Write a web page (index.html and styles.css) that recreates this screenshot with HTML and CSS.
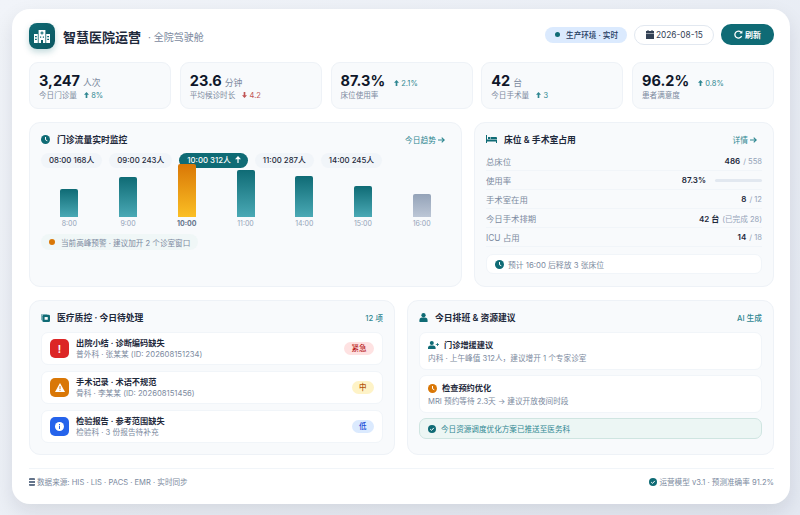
FILE: index.html
```html
<!DOCTYPE html>
<html>
    <head>
        <title>智慧医院运营</title>
        <meta charset="UTF-8">
        <meta name="viewport" content="width=device-width">
        <link rel="stylesheet" href="styles.css">
    </head>
    <body>
        <div class="dash">
            <header class="top">
                <div class="logo">
                    <svg width="16" height="13" viewBox="0 0 16 13"><path fill="#fff" d="M0 4h3.800v9H0zM12.200 4H16v9h-3.800zM4.600 0h6.800v13H9v-3H7v3H4.600z"/><path fill="#0f6b75" d="M7.400 1.500h1.200v1h1v1.100h-1v1H7.400v-1h-1V2.500h1zM1 6h1.800v1.300H1zM1 8.800h1.800v1.300H1zM13.200 6H15v1.300h-1.800zM13.200 8.800H15v1.300h-1.800zM6 6.500h1.200v1.300H6zM8.800 6.500H10v1.300H8.800z"/></svg>
                </div>
                <h1 class="title">智慧医院运营</h1>
                <span class="subtitle">· 全院驾驶舱</span>
                <div class="top-right">
                    <span class="env"><i class="dot"></i>生产环境 · 实时</span>
                    <span class="date">
                        <svg width="8" height="9" viewBox="0 0 8 9"><path fill="#334155" d="M1.500 0h1v1h3V0h1v1H8v2H0V1h1.500zM0 3.600h8V9H0z"/></svg>
                        2026-08-15
                    </span>
                    <span class="refresh">
                        <svg width="9" height="9" viewBox="0 0 9 9"><path fill="none" stroke="#fff" stroke-width="1.300" d="M7.600 6A3.500 3.500 0 1 1 7 2.200"/><path fill="#fff" d="M8.400 .4v3H5.400z"/></svg>
                        刷新
                    </span>
                </div>
            </header>

            <section class="kpis">
                <div class="kpi">
                    <div class="kpi-main"><b>3,247</b><span class="unit">人次</span></div>
                    <div class="kpi-sub">今日门诊量 <span class="up"><svg class="arr" viewBox="0 0 6 7"><path d="M3 0l3 3.300H4V7H2V3.300H0z"/></svg> 8%</span></div>
                </div>
                <div class="kpi">
                    <div class="kpi-main"><b>23.6</b><span class="unit">分钟</span></div>
                    <div class="kpi-sub">平均候诊时长 <span class="down"><svg class="arr" viewBox="0 0 6 7"><path d="M3 7L0 3.700h2V0h2v3.700h2z"/></svg> 4.2</span></div>
                </div>
                <div class="kpi">
                    <div class="kpi-main"><b>87.3%</b><span class="up side"><svg class="arr" viewBox="0 0 6 7"><path d="M3 0l3 3.300H4V7H2V3.300H0z"/></svg> 2.1%</span></div>
                    <div class="kpi-sub">床位使用率</div>
                </div>
                <div class="kpi">
                    <div class="kpi-main"><b>42</b><span class="unit">台</span></div>
                    <div class="kpi-sub">今日手术量 <span class="up"><svg class="arr" viewBox="0 0 6 7"><path d="M3 0l3 3.300H4V7H2V3.300H0z"/></svg> 3</span></div>
                </div>
                <div class="kpi">
                    <div class="kpi-main"><b>96.2%</b><span class="up side"><svg class="arr" viewBox="0 0 6 7"><path d="M3 0l3 3.300H4V7H2V3.300H0z"/></svg> 0.8%</span></div>
                    <div class="kpi-sub">患者满意度</div>
                </div>
            </section>

            <section class="row row-mid">
                <div class="panel">
                    <div class="panel-head">
                        <svg class="head-icon" width="9" height="9" viewBox="0 0 10 10"><circle cx="5" cy="5" r="5" fill="#0f6b75"/><path fill="none" stroke="#fff" stroke-width="1.100" d="M5 2.200V5.300L7 6.400"/></svg>
                        <h2>门诊流量实时监控</h2>
                        <a class="head-link">今日趋势 <svg class="go" viewBox="0 0 7 6"><path d="M0 3h6M3.700 .6L6.200 3 3.700 5.400"/></svg></a>
                    </div>
                    <div class="pills">
                        <span class="pill">08:00 168人</span>
                        <span class="pill">09:00 243人</span>
                        <span class="pill pill-on">10:00 312人 <svg class="pill-arr" viewBox="0 0 6 7"><path d="M3 0l3 3.300H3.600V7H2.400V3.300H0z"/></svg></span>
                        <span class="pill">11:00 287人</span>
                        <span class="pill">14:00 245人</span>
                    </div>
                    <div class="chart">
                        <div class="col"><div class="bar h28"></div><span>8:00</span></div>
                        <div class="col"><div class="bar h40"></div><span>9:00</span></div>
                        <div class="col col-peak"><div class="bar h53"></div><span>10:00</span></div>
                        <div class="col"><div class="bar h47"></div><span>11:00</span></div>
                        <div class="col"><div class="bar h41"></div><span>14:00</span></div>
                        <div class="col"><div class="bar h31"></div><span>15:00</span></div>
                        <div class="col col-off"><div class="bar h23"></div><span>16:00</span></div>
                    </div>
                    <div class="alert"><i class="alert-dot"></i>当前高峰预警 · 建议加开 2 个诊室窗口</div>
                </div>

                <div class="panel">
                    <div class="panel-head">
                        <svg class="head-icon bed" width="11" height="8" viewBox="0 0 11 8"><path fill="#0f6b75" d="M0 0h1v4.500h10V8h-1V6.500H1V8H0zM2 2h2v2H2zM4.500 2H10a1 1 0 0 1 1 1v1H4.500z"/></svg>
                        <h2>床位 &amp; 手术室占用</h2>
                        <a class="head-link">详情 <svg class="go" viewBox="0 0 7 6"><path d="M0 3h6M3.700 .6L6.200 3 3.700 5.400"/></svg></a>
                    </div>
                    <div class="stat"><span class="stat-name">总床位</span><span class="val"><b>486</b> / 558</span></div>
                    <div class="stat"><span class="stat-name">使用率</span><span class="val"><b>87.3%</b><i class="track"></i></span></div>
                    <div class="stat"><span class="stat-name">手术室在用</span><span class="val"><b>8</b> / 12</span></div>
                    <div class="stat"><span class="stat-name">今日手术排期</span><span class="val"><b>42 台</b> (已完成 28)</span></div>
                    <div class="stat"><span class="stat-name">ICU 占用</span><span class="val"><b>14</b> / 18</span></div>
                    <div class="note">
                        <svg width="9" height="9" viewBox="0 0 10 10"><circle cx="5" cy="5" r="5" fill="#0f6b75"/><path fill="none" stroke="#fff" stroke-width="1.100" d="M5 2.200V5.300L7 6.400"/></svg>
                        预计 16:00 后释放 3 张床位
                    </div>
                </div>
            </section>

            <section class="row row-low">
                <div class="panel">
                    <div class="panel-head head-low">
                        <svg class="head-icon" width="9" height="9" viewBox="0 0 10 10"><path fill="#7fb3ba" d="M0 2a1 1 0 0 1 1-1h6v1H1.200v6H0z"/><rect x="1.500" y="2" width="8.500" height="8" rx="1.500" fill="#0f6b75"/><rect x="4" y="4.500" width="3.500" height="3" fill="#fff"/></svg>
                        <h2>医疗质控 · 今日待处理</h2>
                        <a class="head-link strong">12 项</a>
                    </div>
                    <div class="task">
                        <div class="task-icon red">!</div>
                        <div class="task-text"><b>出院小结 · 诊断编码缺失</b><span>普外科 · 张某某 (ID: 202608151234)</span></div>
                        <span class="tag tag-red">紧急</span>
                    </div>
                    <div class="task">
                        <div class="task-icon amber">
                            <svg width="10" height="9" viewBox="0 0 10 9"><path fill="#fff" d="M5 0l5 9H0z"/><path fill="#d97706" d="M4.500 3h1v3h-1zM4.500 6.700h1v1h-1z"/></svg>
                        </div>
                        <div class="task-text"><b>手术记录 · 术语不规范</b><span>骨科 · 李某某 (ID: 202608151456)</span></div>
                        <span class="tag tag-amber">中</span>
                    </div>
                    <div class="task">
                        <div class="task-icon blue">
                            <svg width="9" height="9" viewBox="0 0 9 9"><circle cx="4.500" cy="4.500" r="4.500" fill="#fff"/><path fill="#2563eb" d="M4 3.800h1V7H4zM4 2h1v1H4z"/></svg>
                        </div>
                        <div class="task-text"><b>检验报告 · 参考范围缺失</b><span>检验科 · 3 份报告待补充</span></div>
                        <span class="tag tag-blue">低</span>
                    </div>
                </div>

                <div class="panel">
                    <div class="panel-head head-low">
                        <svg class="head-icon" width="9" height="9" viewBox="0 0 9 10"><circle cx="4.500" cy="2.500" r="2.400" fill="#0f6b75"/><path fill="#0f6b75" d="M0 10V8a3 3 0 0 1 3-3h3a3 3 0 0 1 3 3v2z"/></svg>
                        <h2>今日排班 &amp; 资源建议</h2>
                        <a class="head-link strong">AI 生成</a>
                    </div>
                    <div class="tip">
                        <div class="tip-title">
                            <svg width="11" height="8" viewBox="0 0 11 8"><circle cx="3.800" cy="2" r="2" fill="#0f6b75"/><path fill="#0f6b75" d="M0 8V7a2.500 2.500 0 0 1 2.500-2.500h2.600A2.500 2.500 0 0 1 7.600 7v1zM9 2h.8v1H11v.8H9.800V5H9V3.800H7.800V3H9z"/></svg>
                            门诊增援建议
                        </div>
                        <p>内科 · 上午峰值 312人，建议增开 1 个专家诊室</p>
                    </div>
                    <div class="tip">
                        <div class="tip-title">
                            <svg width="9" height="9" viewBox="0 0 10 10"><circle cx="5" cy="5" r="5" fill="#d97706"/><path fill="none" stroke="#fff" stroke-width="1.100" d="M5 2.200V5.300L7 6.400"/></svg>
                            检查预约优化
                        </div>
                        <p>MRI 预约等待 2.3天 → 建议开放夜间时段</p>
                    </div>
                    <div class="pushed">
                        <svg width="8" height="8" viewBox="0 0 8 8"><circle cx="4" cy="4" r="4" fill="#0f6b75"/><path fill="none" stroke="#fff" stroke-width="1" d="M2.200 4.100L3.500 5.400 5.800 2.900"/></svg>
                        今日资源调度优化方案已推送至医务科
                    </div>
                </div>
            </section>

            <footer class="foot">
                <span class="foot-item">
                    <svg width="6" height="8" viewBox="0 0 6 8"><path fill="#64748b" d="M0 1a1 1 0 0 1 1-1h4a1 1 0 0 1 1 1v1H0zM0 3h6v2H0zM0 6h6v1a1 1 0 0 1-1 1H1a1 1 0 0 1-1-1z"/></svg>
                    数据来源: HIS · LIS · PACS · EMR · 实时同步
                </span>
                <span class="foot-item">
                    <svg width="8" height="8" viewBox="0 0 8 8"><circle cx="4" cy="4" r="4" fill="#0f6b75"/><path fill="none" stroke="#fff" stroke-width="1" d="M2.200 4.100L3.500 5.400 5.800 2.900"/></svg>
                    运营模型 v3.1 · 预测准确率 91.2%
                </span>
            </footer>
        </div>
    </body>
</html>
```

FILE: styles.css
```css
*
{
    box-sizing: border-box;
}
html, body
{
    height: 100%;
}
body
{
    margin: 0;
    padding: 9px 10px 11px 12px;
    overflow: hidden;
    background: linear-gradient(135deg, #f1f4f9, #e4e9f2);
    font-family: Inter, "Noto Sans CJK SC", sans-serif;
    color: #0f172a;
}
h1, h2, p
{
    margin: 0;
}
.dash
{
    height: 495px;
    padding: 14px 16px 0 17px;
    background: #fff;
    border-radius: 18px;
    box-shadow: 0 8px 20px rgba(15, 23, 42, 0.10);
}

/* header */
.top
{
    display: flex;
    align-items: center;
    height: 26px;
}
.logo
{
    width: 26px;
    height: 26px;
    display: flex;
    align-items: center;
    justify-content: center;
    background: linear-gradient(135deg, #0f6b75, #0b5660);
    border-radius: 8px;
    box-shadow: 0 3px 6px rgba(15, 107, 117, 0.25);
}
.title
{
    margin-left: 8px;
    font-size: 13px;
    font-weight: 700;
    color: #1e293b;
}
.subtitle
{
    margin-left: 7px;
    font-size: 10px;
    color: #7c8aa0;
}
.top-right
{
    margin-left: auto;
    display: flex;
    align-items: center;
    gap: 7px;
    margin-top: -3px;
}
.env
{
    display: flex;
    align-items: center;
    height: 16px;
    padding: 0 9px 0 10px;
    background: #dbeafe;
    border-radius: 8px;
    font-size: 7.600px;
    font-weight: 500;
    color: #1e3a5f;
}
.dot
{
    width: 5px;
    height: 5px;
    margin-right: 6px;
    background: #0f6b75;
    border-radius: 50%;
}
.date
{
    display: flex;
    align-items: center;
    gap: 2px;
    height: 20px;
    width: 80px;
    padding-left: 11px;
    background: #fff;
    border: 1px solid #e2e8f0;
    border-radius: 10px;
    font-size: 8.300px;
    color: #334155;
}
.refresh
{
    display: flex;
    align-items: center;
    justify-content: center;
    gap: 2px;
    width: 53px;
    height: 21px;
    background: #0f6b75;
    border-radius: 10px;
    font-size: 8px;
    font-weight: 600;
    color: #fff;
}

/* kpi cards */
.kpis
{
    display: grid;
    grid-template-columns: repeat(5, 1fr);
    gap: 8.750px;
    margin-top: 13px;
}
.kpi
{
    height: 47px;
    padding: 8px 9px 0;
    background: #f8fafc;
    border: 1px solid #eef2f7;
    border-radius: 9px;
}
.kpi-main
{
    display: flex;
    align-items: baseline;
    height: 19px;
}
.kpi-main b
{
    font-size: 14.500px;
    font-weight: 700;
    line-height: 19px;
}
.unit
{
    margin-left: 3px;
    font-size: 8.800px;
    color: #7c8aa0;
}
.kpi-sub
{
    font-size: 7.600px;
    line-height: 12px;
    color: #7c8aa0;
}
.up, .down
{
    margin-left: 5px;
    font-size: 7.500px;
    color: #2f8791;
}
.side
{
    margin-left: 9px;
}
.down
{
    color: #c05454;
}
.arr
{
    width: 5px;
    height: 6px;
    fill: currentColor;
}
.pill-arr
{
    width: 6px;
    height: 7px;
    margin-left: 2px;
    fill: #fff;
}
.go
{
    width: 7px;
    height: 6px;
    fill: none;
    stroke: currentColor;
    stroke-width: 1.100;
}

/* panels */
.row
{
    display: grid;
    gap: 12px;
}
.row-mid
{
    grid-template-columns: 433px 300px;
    margin-top: 13px;
    height: 165px;
}
.row-low
{
    grid-template-columns: 366px 367px;
    margin-top: 13px;
    height: 155px;
}
.panel
{
    padding: 10px 11px;
    background: #f8fafc;
    border: 1px solid #eef2f7;
    border-radius: 11px;
}
.panel-head
{
    display: flex;
    align-items: center;
    height: 12px;
    margin-bottom: 7px;
}
.head-low
{
    margin-bottom: 9px;
}
.head-icon
{
    margin-right: 7px;
}
.panel-head h2
{
    font-size: 8.800px;
    font-weight: 600;
    color: #1e293b;
}
.head-link
{
    margin-left: auto;
    margin-right: 5px;
    font-size: 7.700px;
    color: #2f8791;
}
.strong
{
    margin-right: 0;
    font-weight: 500;
}

/* flow chart */
.pills
{
    display: flex;
    gap: 7px;
    margin-top: 8px;
}
.pill
{
    height: 15px;
    padding: 0 8px;
    background: #f1f5f9;
    border-radius: 8px;
    font-size: 7.800px;
    font-weight: 500;
    line-height: 15px;
    color: #1e293b;
}
.pill-on
{
    padding-right: 7px;
    background: #0f6b75;
    color: #fff;
}
.chart
{
    display: flex;
    align-items: flex-end;
    height: 53px;
    margin: -4px -1px 17px;
}
.col
{
    position: relative;
    flex: 1;
    display: flex;
    justify-content: center;
}
.col span
{
    position: absolute;
    top: 100%;
    margin-top: 2px;
    font-size: 7px;
    color: #94a3b8;
}
.col-peak span
{
    font-weight: 700;
    color: #64748b;
}
.bar
{
    width: 18px;
    background: linear-gradient(180deg, #0f6b75, #4aa9b5);
    border-radius: 2px 2px 0 0;
}
.col-peak .bar
{
    background: linear-gradient(180deg, #d97706, #fbbf24);
}
.col-off .bar
{
    background: linear-gradient(180deg, #94a3b8, #bcc6d6);
}
.h23 { height: 23px; }
.h28 { height: 28px; }
.h31 { height: 31px; }
.h40 { height: 40px; }
.h41 { height: 41px; }
.h47 { height: 47px; }
.h53 { height: 53px; }
.alert
{
    display: flex;
    align-items: center;
    width: fit-content;
    height: 16px;
    padding: 0 8px;
    background: #f0f7f7;
    border-radius: 8px;
    font-size: 7.600px;
    color: #7c8aa0;
}
.alert-dot
{
    width: 6px;
    height: 6px;
    margin-right: 6px;
    background: #d97706;
    border-radius: 50%;
}

/* occupancy */
.stat
{
    display: flex;
    align-items: center;
    justify-content: space-between;
    height: 19px;
    border-bottom: 1px solid #f1f5f9;
    font-size: 7.600px;
    color: #94a3b8;
}
.stat-name
{
    font-size: 8.400px;
    color: #7c8aa0;
}
.val
{
    display: flex;
    align-items: center;
    gap: 3px;
}
.val b
{
    font-size: 8px;
    font-weight: 600;
    color: #1e293b;
}
.track
{
    width: 47px;
    height: 3px;
    margin-left: 6px;
    background: #e2e8f0;
    border-radius: 2px;
}
.note
{
    display: flex;
    align-items: center;
    gap: 4px;
    height: 20px;
    margin-top: 7px;
    padding-left: 8px;
    background: #fff;
    border: 1px solid #f1f5f9;
    border-radius: 7px;
    font-size: 7.800px;
    color: #7c8aa0;
}

/* quality list */
.task
{
    display: flex;
    align-items: center;
    height: 33px;
    margin-bottom: 6px;
    padding: 0 8px 0 8px;
    background: #fff;
    border: 1px solid #f1f5f9;
    border-radius: 7px;
}
.task:last-child
{
    margin-bottom: 0;
}
.task-icon
{
    width: 19px;
    height: 19px;
    display: flex;
    align-items: center;
    justify-content: center;
    border-radius: 5px;
    font-size: 10px;
    font-weight: 700;
    color: #fff;
}
.red { background: #dc2626; }
.amber { background: #d97706; }
.blue { background: #2563eb; }
.task-text
{
    margin-left: 7px;
    display: flex;
    flex-direction: column;
    font-size: 7.700px;
    line-height: 11px;
    color: #7c8aa0;
}
.task-text b
{
    font-size: 8.200px;
    font-weight: 600;
    color: #1e293b;
}
.tag
{
    margin-left: auto;
    height: 13px;
    padding: 0 7.500px;
    border-radius: 7px;
    font-size: 7.500px;
    font-weight: 500;
    line-height: 13px;
}
.tag-red { background: #fee2e2; color: #b91c1c; }
.tag-amber { background: #fef3c7; color: #b45309; }
.tag-blue { background: #dbeafe; color: #1d4ed8; }

/* suggestions */
.tip
{
    height: 38px;
    margin-bottom: 5px;
    padding: 6px 8px;
    background: #fff;
    border: 1px solid #f1f5f9;
    border-radius: 7px;
}
.tip-title
{
    display: flex;
    align-items: center;
    gap: 5px;
    font-size: 8.200px;
    font-weight: 600;
    line-height: 12px;
    color: #1e293b;
}
.tip p
{
    margin-top: 2px;
    font-size: 7.650px;
    line-height: 11px;
    color: #7c8aa0;
}
.pushed
{
    display: flex;
    align-items: center;
    gap: 5px;
    height: 21px;
    padding-left: 8px;
    background: #ecf6f4;
    border: 1px solid #cfe5e1;
    border-radius: 7px;
    font-size: 7.600px;
    color: #2f8791;
}

/* footer */
.foot
{
    display: flex;
    justify-content: space-between;
    align-items: center;
    margin-top: 13px;
    padding-top: 7px;
    border-top: 1px solid #f1f5f9;
    font-size: 7.600px;
    color: #7c8aa0;
}
.foot-item
{
    display: flex;
    align-items: center;
    gap: 2px;
}
```
